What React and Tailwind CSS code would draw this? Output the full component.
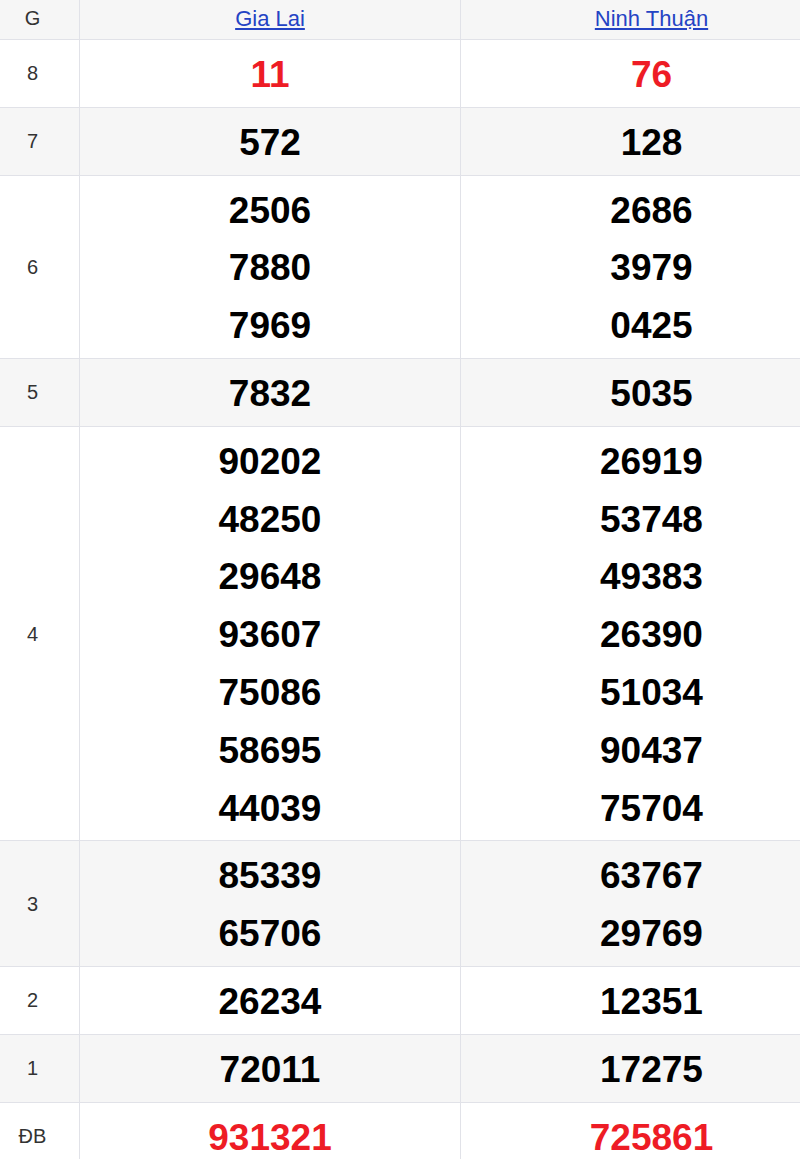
import React from 'react';

const provinces = ['Gia Lai', 'Ninh Thuận'];

const prizes = [
  { label: '8', red: true, values: [['11'], ['76']] },
  { label: '7', values: [['572'], ['128']] },
  { label: '6', values: [['2506', '7880', '7969'], ['2686', '3979', '0425']] },
  { label: '5', values: [['7832'], ['5035']] },
  {
    label: '4',
    values: [
      ['90202', '48250', '29648', '93607', '75086', '58695', '44039'],
      ['26919', '53748', '49383', '26390', '51034', '90437', '75704'],
    ],
  },
  { label: '3', values: [['85339', '65706'], ['63767', '29769']] },
  { label: '2', values: [['26234'], ['12351']] },
  { label: '1', values: [['72011'], ['17275']] },
  { label: 'ĐB', red: true, values: [['931321'], ['725861']] },
];

const font = { fontFamily: '"Liberation Sans", Arial, sans-serif' };

export default function App() {
  return (
    <div className="w-[800px] h-[1159px] overflow-hidden bg-white" style={font}>
      <div className="w-[842px]">
        {/* Header */}
        <div className="flex h-[40px] bg-[#f6f6f6] border-b border-[#e1e2e8]">
          <div className="w-[80px] shrink-0 pr-[14px] pb-[3px] border-r border-[#e1e2e8] flex items-center justify-center text-[20px] text-[#333]">
            G
          </div>
          {provinces.map((p, i) => (
            <div
              key={p}
              className={`w-[381px] shrink-0 pb-[3px] flex items-center justify-center ${i === 0 ? 'border-r border-[#e1e2e8]' : ''}`}
            >
              <a href="#" className="text-[22px] text-[#2443c4] underline">
                {p}
              </a>
            </div>
          ))}
        </div>

        {/* Prize rows */}
        {prizes.map((row, idx) => (
          <div
            key={row.label}
            className={`flex border-b border-[#e1e2e8] ${idx % 2 === 1 ? 'bg-[#f6f6f6]' : 'bg-white'}`}
          >
            <div className="w-[80px] shrink-0 pr-[14px] border-r border-[#e1e2e8] flex items-center justify-center text-[20px] text-[#333]">
              {row.label}
            </div>
            {row.values.map((col, i) => (
              <div
                key={i}
                className={`w-[381px] shrink-0 pt-[6px] pb-[3px] flex flex-col items-center ${i === 0 ? 'border-r border-[#e1e2e8]' : ''}`}
              >
                {col.map((n, k) => (
                  <span
                    key={k}
                    className={`text-[37px] leading-[57.8px] font-bold ${row.red ? 'text-[#ee1c25]' : 'text-black'}`}
                  >
                    {n}
                  </span>
                ))}
              </div>
            ))}
          </div>
        ))}
      </div>
    </div>
  );
}
